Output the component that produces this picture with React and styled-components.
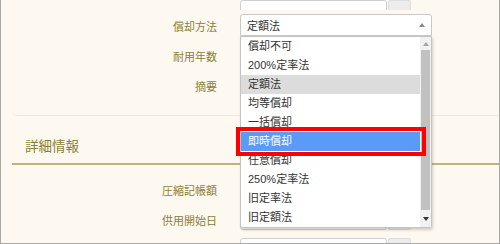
import React from 'react';
import styled, { createGlobalStyle } from 'styled-components';

const GlobalStyle = createGlobalStyle`
  html, body {
    margin: 0;
    padding: 0;
    background: #fdf9f0;
  }
  body {
    font-family: "Liberation Sans", "Noto Sans CJK JP", sans-serif;
  }
`;

const Panel = styled.div`
  width: 500px;
  height: 244px;
  box-sizing: border-box;
  background: #fdf9f0;
  border: 1px solid #a8a8a8;
  border-top: none;
  overflow: hidden;
`;

const Content = styled.div`
  padding-left: 11px;
`;

const Card = styled.div`
  padding-bottom: 15px;
  border-bottom: 1px solid #efe9dc;
  border-bottom-left-radius: 5px;
`;

const Row = styled.div`
  display: grid;
  grid-template-columns: 205px 192px;
  column-gap: 23px;
  align-items: center;
  height: ${p => p.$h || 30}px;
  ${p => p.$clip && `
    align-items: end;
    overflow: hidden;
    padding-bottom: 4px;
    box-sizing: border-box;
  `}
`;

const Label = styled.div`
  text-align: right;
  font-size: 11px;
  color: #8d7e36;
  font-family: "Noto Sans CJK JP", sans-serif;
  padding-top: 2px;
`;

const InputGroup = styled.div`
  display: flex;
  gap: 1px;
  height: 22px;
`;

const TextBox = styled.div`
  width: 147px;
  box-sizing: border-box;
  background: #fff;
  border: 1px solid #cfcfcf;
  border-radius: 3px;
`;

const AddonButton = styled.div`
  width: 23px;
  background: #ececec;
  border: 1px solid #dedede;
  border-radius: 2px;
  box-sizing: border-box;
`;

const SelectWrap = styled.div`
  position: relative;
  width: 192px;
`;

const SelectBox = styled.div`
  height: 22px;
  box-sizing: border-box;
  background: #fff;
  border: 1px solid #c8c8c8;
  border-radius: 3px 3px 0 0;
  display: flex;
  align-items: center;
  justify-content: space-between;
  padding: 0 6px 0 6px;
  font-size: 11px;
  color: #333;
`;

const Arrow = styled.span`
  width: 0;
  height: 0;
  border-left: 3px solid transparent;
  border-right: 3px solid transparent;
  ${p => p.$down
    ? `border-top: 4px solid ${p.$color || '#444'};`
    : `border-bottom: 4px solid ${p.$color || '#777'};`}
`;

const ListBox = styled.div`
  position: absolute;
  top: 22px;
  left: 0;
  width: 192px;
  height: 192px;
  box-sizing: border-box;
  background: #fff;
  border: 1px solid #c4c4c4;
  border-radius: 0 0 3px 3px;
  box-shadow: 1px 2px 3px rgba(0, 0, 0, 0.18);
  display: flex;
  z-index: 5;
`;

const Options = styled.div`
  flex: 1;
`;

const Option = styled.div`
  position: relative;
  height: 19px;
  line-height: 19px;
  padding-left: 7px;
  font-size: 11px;
  color: ${p => (p.$active ? '#fff' : '#333')};
  background: ${p => (p.$active ? '#5a9bf8' : p.$current ? '#dcdcdc' : 'transparent')};
  white-space: nowrap;
`;

const Marker = styled.div`
  position: absolute;
  top: -5px;
  bottom: -5px;
  left: -5px;
  right: -6px;
  border: 4px solid #ff0000;
  z-index: 6;
`;

const ScrollBar = styled.div`
  width: 11px;
  background: #f1f1f1;
  display: flex;
  flex-direction: column;
`;

const ScrollButton = styled.div`
  height: ${p => p.$h}px;
  display: flex;
  align-items: center;
  justify-content: center;
`;

const Thumb = styled.div`
  flex: 1;
  margin: 0 1px;
  background: #c1c1c1;
`;

const Heading = styled.div`
  padding: 19px 0 8px 13px;
  line-height: 20px;
  font-size: 13.5px;
  color: #8d7e36;
  font-family: "Noto Sans CJK JP", sans-serif;
  border-bottom: 2px solid #c2b37a;
  margin-bottom: 9px;
`;

const options = [
  '償却不可',
  '200%定率法',
  '定額法',
  '均等償却',
  '一括償却',
  '即時償却',
  '任意償却',
  '250%定率法',
  '旧定率法',
  '旧定額法',
];

function Field() {
  return (
    <InputGroup>
      <TextBox />
      <AddonButton />
    </InputGroup>
  );
}

export default function App() {
  return (
    <>
      <GlobalStyle />
      <Panel>
        <Content>
          <Card>
            <Row $h={10} $clip>
              <div />
              <Field />
            </Row>
            <Row>
              <Label>償却方法</Label>
              <SelectWrap>
                <SelectBox>
                  <span>定額法</span>
                  <Arrow $color="#888" />
                </SelectBox>
                <ListBox>
                  <Options>
                    {options.map((o, i) => (
                      <Option key={o} $current={i === 2} $active={i === 5}>
                        {o}
                        {i === 5 && <Marker />}
                      </Option>
                    ))}
                  </Options>
                  <ScrollBar>
                    <ScrollButton $h={13}>
                      <Arrow $color="#a3a3a3" />
                    </ScrollButton>
                    <Thumb />
                    <ScrollButton $h={17}>
                      <Arrow $down $color="#333" />
                    </ScrollButton>
                  </ScrollBar>
                </ListBox>
              </SelectWrap>
            </Row>
            <Row>
              <Label>耐用年数</Label>
              <Field />
            </Row>
            <Row>
              <Label>摘要</Label>
              <Field />
            </Row>
          </Card>
          <Heading>詳細情報</Heading>
          <Row>
            <Label>圧縮記帳額</Label>
            <Field />
          </Row>
          <Row>
            <Label>供用開始日</Label>
            <Field />
          </Row>
          <Row>
            <div />
            <Field />
          </Row>
        </Content>
      </Panel>
    </>
  );
}
